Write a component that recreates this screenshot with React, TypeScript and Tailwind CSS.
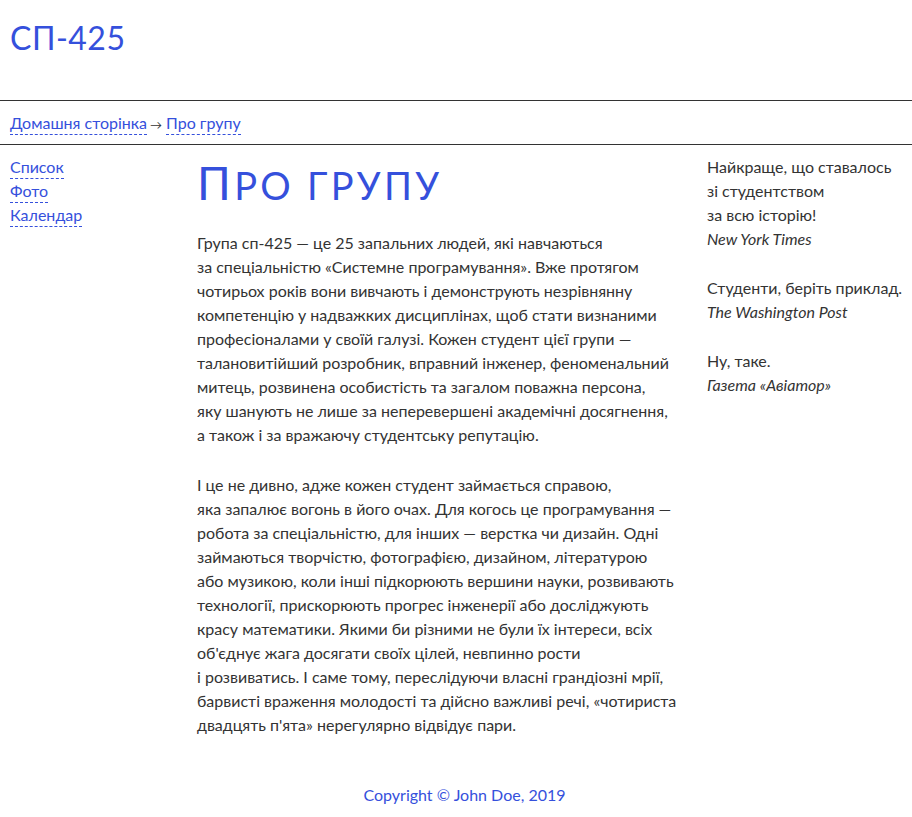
import type { ReactNode } from 'react';

const BLUE = 'text-[#3550dc]';

const NAV_LINKS = ['Список', 'Фото', 'Календар'];

const PARAGRAPH_ONE = [
  'Група сп-425 — це 25 запальних людей, які навчаються',
  'за спеціальністю «Системне програмування». Вже протягом',
  'чотирьох років вони вивчають і демонструють незрівнянну',
  'компетенцію у надважких дисциплінах, щоб стати визнаними',
  'професіоналами у своїй галузі. Кожен студент цієї групи —',
  'талановитійший розробник, вправний інженер, феноменальний',
  'митець, розвинена особистість та загалом поважна персона,',
  'яку шанують не лише за неперевершені академічні досягнення,',
  'а також і за вражаючу студентську репутацію.',
];

const PARAGRAPH_TWO = [
  'І це не дивно, адже кожен студент займається справою,',
  'яка запалює вогонь в його очах. Для когось це програмування —',
  'робота за спеціальністю, для інших — верстка чи дизайн. Одні',
  'займаються творчістю, фотографією, дизайном, літературою',
  'або музикою, коли інші підкорюють вершини науки, розвивають',
  'технології, прискорюють прогрес інженерії або досліджують',
  'красу математики. Якими би різними не були їх інтереси, всіх',
  "об'єднує жага досягати своїх цілей, невпинно рости",
  'і розвиватись. І саме тому, переслідуючи власні грандіозні мрії,',
  'барвисті враження молодості та дійсно важливі речі, «чотириста',
  "двадцять п'ята» нерегулярно відвідує пари.",
];

const QUOTES = [
  { lines: ['Найкраще, що ставалось', 'зі студентством', 'за всю історію!'], source: 'New York Times' },
  { lines: ['Студенти, беріть приклад.'], source: 'The Washington Post' },
  { lines: ['Ну, таке.'], source: 'Газета «Авіатор»' },
];

function Lines({ lines }: { lines: string[] }) {
  return (
    <>
      {lines.map((line, i) => (
        <span key={i} className="block whitespace-nowrap">
          {line}
        </span>
      ))}
    </>
  );
}

function DashedLink({ children }: { children: ReactNode }) {
  return (
    <a href="#" className={`${BLUE} inline-block leading-[23px] border-b border-dashed border-[#3550dc]`}>
      {children}
    </a>
  );
}

export default function App() {
  return (
    <div
      className="min-h-[817px] bg-white text-[#333] text-[16px] leading-[24px]"
      style={{ fontFamily: '"Lato", "Roboto", sans-serif' }}
    >
      <header className="h-[100px] px-[10px] pt-[18px]">
        <h1 className={`${BLUE} text-[32px] leading-[40px] tracking-[0.5px]`}>СП-425</h1>
      </header>

      <nav className="h-[45px] border-y border-[#333] px-[10px] pt-[10px]">
        <DashedLink>Домашня сторінка</DashedLink>
        <span className="inline-block text-[12px] ml-[3px] mr-[4px]">→</span>
        <DashedLink>Про групу</DashedLink>
      </nav>

      <div className="grid grid-cols-[167px_490px_195px] gap-x-[20px] px-[10px] pt-[10px]">
        <aside className="flex flex-col items-start">
          {NAV_LINKS.map((link) => (
            <DashedLink key={link}>{link}</DashedLink>
          ))}
        </aside>

        <main>
          <h2 className={`${BLUE} h-[56px] leading-[56px] tracking-[3.3px] mb-[20px] whitespace-nowrap`}>
            <span className="text-[46px]">П</span>
            <span className="text-[38px] uppercase">ро групу</span>
          </h2>
          <p>
            <Lines lines={PARAGRAPH_ONE} />
          </p>
          <p className="mt-[26px]">
            <Lines lines={PARAGRAPH_TWO} />
          </p>
        </main>

        <aside className="flex flex-col gap-[25px]">
          {QUOTES.map((quote) => (
            <blockquote key={quote.source}>
              <Lines lines={quote.lines} />
              <cite className="block">{quote.source}</cite>
            </blockquote>
          ))}
        </aside>
      </div>

      <footer className={`${BLUE} text-center pl-[17px] pt-[46px] pb-[10px]`}>Copyright © John Doe, 2019</footer>
    </div>
  );
}
